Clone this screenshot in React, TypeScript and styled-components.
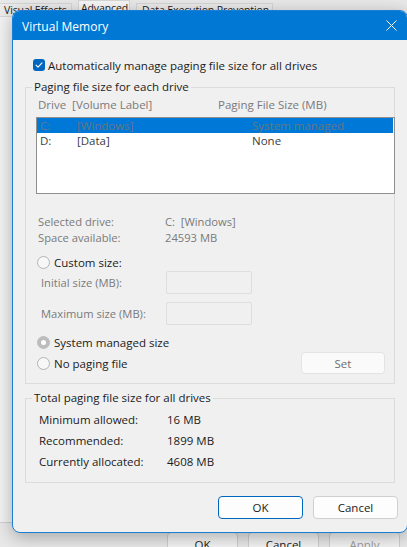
import React from "react";
import styled, { createGlobalStyle, css } from "styled-components";

const Global = createGlobalStyle`
  html, body {
    margin: 0;
    padding: 0;
    width: 407px;
    height: 547px;
    overflow: hidden;
  }
  body {
    font-family: "Open Sans", "Noto Sans", sans-serif;
    font-size: 11px;
    color: #1b1b1b;
  }
  * { box-sizing: border-box; }
`;

const Desktop = styled.div`
  position: relative;
  width: 407px;
  height: 547px;
  overflow: hidden;
  background: #e9e9e9;
  display: flex;
  flex-direction: column;
`;

const TabStrip = styled.div`
  display: flex;
  align-items: flex-end;
  height: 16px;
  gap: 6px;
  margin-left: -2px;
`;

const Tab = styled.div<{ $active?: boolean; $w: number }>`
  width: ${(p) => p.$w}px;
  height: ${(p) => (p.$active ? 16 : 13)}px;
  padding: ${(p) => (p.$active ? "0 0 0 2px" : "0 0 0 5px")};
  border: 1px solid #d6d6d6;
  border-bottom: none;
  background: ${(p) => (p.$active ? "#f7f7f7" : "#ebebeb")};
  line-height: ${(p) => (p.$active ? 14 : 13)}px;
  font-size: 10.5px;
  letter-spacing: -0.1px;
  white-space: nowrap;
  overflow: hidden;
  color: #1b1b1b;
`;

const TabPanel = styled.div`
  flex: 0 0 507px;
  background: #f3f3f3;
  border-top: 1px solid #d6d6d6;
  border-bottom: 1px solid #cfcfcf;
`;

const BackButtons = styled.div`
  display: flex;
  justify-content: flex-end;
  gap: 10px;
  padding-right: 7px;
  margin-top: 9px;
`;

const BackButton = styled.div<{ $disabled?: boolean }>`
  width: 71px;
  height: 23px;
  border: 1px solid #cfcfcf;
  border-radius: 4px;
  background: #f4f4f4;
  text-align: center;
  line-height: 24px;
  font-size: 11.5px;
  color: ${(p) => (p.$disabled ? "#9a9a9a" : "#1b1b1b")};
`;

const Window = styled.div`
  position: absolute;
  left: 12px;
  top: 10px;
  width: 396px;
  height: 523px;
  border: 1px solid #1a7fd4;
  border-radius: 8px;
  overflow: hidden;
  background: #f0f0f0;
  box-shadow: 0 4px 18px rgba(0, 0, 0, 0.3);
  display: flex;
  flex-direction: column;
`;

const TitleBar = styled.div`
  flex: 0 0 29px;
  background: #0078d4;
  display: flex;
  align-items: center;
  justify-content: space-between;
  padding: 0 10px 0 9px;
  color: #ffffff;
  font-size: 12px;
`;

const Title = styled.span`
  margin-top: 1px;
`;

const Body = styled.div`
  flex: 1;
  display: flex;
  flex-direction: column;
  padding: 17px 12px 0 12px;
`;

const CheckRow = styled.label`
  display: flex;
  align-items: center;
  height: 16px;
  margin-left: 8px;
  gap: 3px;
  font-size: 11.5px;
`;

const CheckBox = styled.span`
  width: 12px;
  height: 12px;
  border-radius: 3px;
  background: #0067c0;
  display: flex;
  align-items: center;
  justify-content: center;
`;

const Group = styled.fieldset<{ $top: number }>`
  margin: ${(p) => p.$top}px 0 0 0;
  padding: 0;
  min-inline-size: 0;
  border: 1px solid #dcdcdc;
  display: flex;
  flex-direction: column;
`;

const Legend = styled.legend`
  margin-left: 6px;
  padding: 0 2px;
  line-height: 16px;
  font-size: 11.5px;
  color: #1b1b1b;
`;

const ColumnHeads = styled.div`
  display: flex;
  margin-top: 2px;
  padding-left: 12px;
  height: 16px;
  line-height: 16px;
  color: #7a7a7a;
  font-size: 11.5px;
`;

const HeadCell = styled.span<{ $w?: number }>`
  ${(p) => p.$w && css`width: ${p.$w}px;`}
  white-space: nowrap;
`;

const ListBox = styled.div`
  margin: 4px -1px 0 10px;
  height: 77px;
  border: 1px solid #8f8f8f;
  background: #ffffff;
  padding: 0 1px 0 0;
`;

const ListRow = styled.div<{ $selected?: boolean }>`
  display: grid;
  grid-template-columns: 37px 175px 1fr;
  height: 15px;
  line-height: 15px;
  padding-left: 3px;
  font-size: 11.5px;
  background: ${(p) => (p.$selected ? "#0078d7" : "transparent")};
  color: ${(p) => (p.$selected ? "#687584" : "#3c3c3c")};
  white-space: nowrap;
`;

const InfoBlock = styled.div`
  margin-top: 20px;
  padding-left: 12px;
  display: flex;
  flex-direction: column;
`;

const InfoRow = styled.div<{ $labelW: number; $h: number; $muted?: boolean }>`
  display: grid;
  grid-template-columns: ${(p) => p.$labelW}px 1fr;
  height: ${(p) => p.$h}px;
  line-height: ${(p) => p.$h}px;
  align-items: center;
  color: ${(p) => (p.$muted ? "#7a7a7a" : "#1b1b1b")};
  font-size: ${(p) => (p.$muted ? "11.2px" : "11.5px")};
  white-space: nowrap;
`;

const RadioRow = styled.div<{ $top: number }>`
  display: flex;
  align-items: center;
  gap: 4px;
  height: 16px;
  margin-top: ${(p) => p.$top}px;
  padding-left: 11px;
  font-size: 11.5px;
  white-space: nowrap;
`;

const Radio = styled.span<{ $checked?: boolean }>`
  width: 13px;
  height: 13px;
  border-radius: 50%;
  flex: 0 0 13px;
  display: flex;
  align-items: center;
  justify-content: center;
  ${(p) =>
    p.$checked
      ? css`
          background: #bdbdbd;
          border: 1px solid #bdbdbd;
          &::after {
            content: "";
            width: 5px;
            height: 5px;
            border-radius: 50%;
            background: #ffffff;
          }
        `
      : css`
          background: #f7f7f7;
          border: 1px solid #b4b4b4;
        `}
`;

const SizeRow = styled.div<{ $top: number }>`
  display: grid;
  grid-template-columns: 125px 86px;
  align-items: center;
  margin-top: ${(p) => p.$top}px;
  padding-left: 15px;
  color: #7a7a7a;
  font-size: 11.2px;
  white-space: nowrap;
`;

const SizeInput = styled.div`
  height: 23px;
  border: 1px solid #dedede;
  border-radius: 2px;
  background: #f0f0f0;
`;

const LastRow = styled.div`
  display: flex;
  align-items: center;
  justify-content: space-between;
  margin-top: 2px;
  height: 22px;
  padding-right: 9px;
  margin-bottom: 9px;
`;

const Button = styled.div<{ $primary?: boolean; $disabled?: boolean; $w: number; $h: number }>`
  width: ${(p) => p.$w}px;
  height: ${(p) => p.$h}px;
  border-radius: 4px;
  border: 1px solid ${(p) => (p.$primary ? "#0067c0" : p.$disabled ? "#e3e3e3" : "#d0d0d0")};
  background: ${(p) => (p.$disabled ? "#fafafa" : "#fdfdfd")};
  color: ${(p) => (p.$disabled ? "#6f6f6f" : "#1b1b1b")};
  display: flex;
  align-items: center;
  justify-content: center;
  font-size: 11.5px;
`;

const TotalRows = styled.div`
  padding: 3px 0 10px 13px;
  display: flex;
  flex-direction: column;
`;

const DialogButtons = styled.div`
  display: flex;
  justify-content: flex-end;
  gap: 10px;
  margin: 13px -3px 0 0;
`;

const CloseIcon = () => (
  <svg width="11" height="11" viewBox="0 0 11 11">
    <path d="M0.5 0.5 L10.5 10.5 M10.5 0.5 L0.5 10.5" stroke="#ffffff" strokeWidth="1" fill="none" />
  </svg>
);

const CheckMark = () => (
  <svg width="8" height="8" viewBox="0 0 8 8">
    <path d="M1 4.2 L3 6.2 L7 1.8" stroke="#ffffff" strokeWidth="1.1" fill="none" strokeLinecap="round" strokeLinejoin="round" />
  </svg>
);

export default function App() {
  return (
    <>
      <Global />
      <Desktop>
        <TabStrip>
          <Tab $w={74}>Visual Effects</Tab>
          <Tab $active $w={52}>Advanced</Tab>
          <Tab $w={137}>Data Execution Prevention</Tab>
        </TabStrip>
        <TabPanel />
        <BackButtons>
          <BackButton>OK</BackButton>
          <BackButton>Cancel</BackButton>
          <BackButton $disabled>Apply</BackButton>
        </BackButtons>

        <Window>
          <TitleBar>
            <Title>Virtual Memory</Title>
            <CloseIcon />
          </TitleBar>
          <Body>
            <CheckRow>
              <CheckBox>
                <CheckMark />
              </CheckBox>
              Automatically manage paging file size for all drives
            </CheckRow>

            <Group $top={6}>
              <Legend>Paging file size for each drive</Legend>
              <ColumnHeads>
                <HeadCell $w={180}>Drive&nbsp;&nbsp;[Volume Label]</HeadCell>
                <HeadCell>Paging File Size (MB)</HeadCell>
              </ColumnHeads>
              <ListBox>
                <ListRow $selected>
                  <span>C:</span>
                  <span>[Windows]</span>
                  <span>System managed</span>
                </ListRow>
                <ListRow>
                  <span>D:</span>
                  <span>[Data]</span>
                  <span>None</span>
                </ListRow>
              </ListBox>

              <InfoBlock>
                <InfoRow $labelW={127} $h={16} $muted>
                  <span>Selected drive:</span>
                  <span>C:&nbsp;&nbsp;[Windows]</span>
                </InfoRow>
                <InfoRow $labelW={127} $h={16} $muted>
                  <span>Space available:</span>
                  <span>24593 MB</span>
                </InfoRow>
              </InfoBlock>

              <RadioRow $top={8}>
                <Radio />
                Custom size:
              </RadioRow>
              <SizeRow $top={1}>
                <span>Initial size (MB):</span>
                <SizeInput />
              </SizeRow>
              <SizeRow $top={8}>
                <span>Maximum size (MB):</span>
                <SizeInput />
              </SizeRow>
              <RadioRow $top={9}>
                <Radio $checked />
                System managed size
              </RadioRow>
              <LastRow>
                <RadioRow $top={0}>
                  <Radio />
                  No paging file
                </RadioRow>
                <Button $disabled $w={84} $h={22}>
                  Set
                </Button>
              </LastRow>
            </Group>

            <Group $top={6}>
              <Legend>Total paging file size for all drives</Legend>
              <TotalRows>
                <InfoRow $labelW={128} $h={21}>
                  <span>Minimum allowed:</span>
                  <span>16 MB</span>
                </InfoRow>
                <InfoRow $labelW={128} $h={21}>
                  <span>Recommended:</span>
                  <span>1899 MB</span>
                </InfoRow>
                <InfoRow $labelW={128} $h={21}>
                  <span>Currently allocated:</span>
                  <span>4608 MB</span>
                </InfoRow>
              </TotalRows>
            </Group>

            <DialogButtons>
              <Button $primary $w={85} $h={23}>
                OK
              </Button>
              <Button $w={85} $h={23}>
                Cancel
              </Button>
            </DialogButtons>
          </Body>
        </Window>
      </Desktop>
    </>
  );
}
